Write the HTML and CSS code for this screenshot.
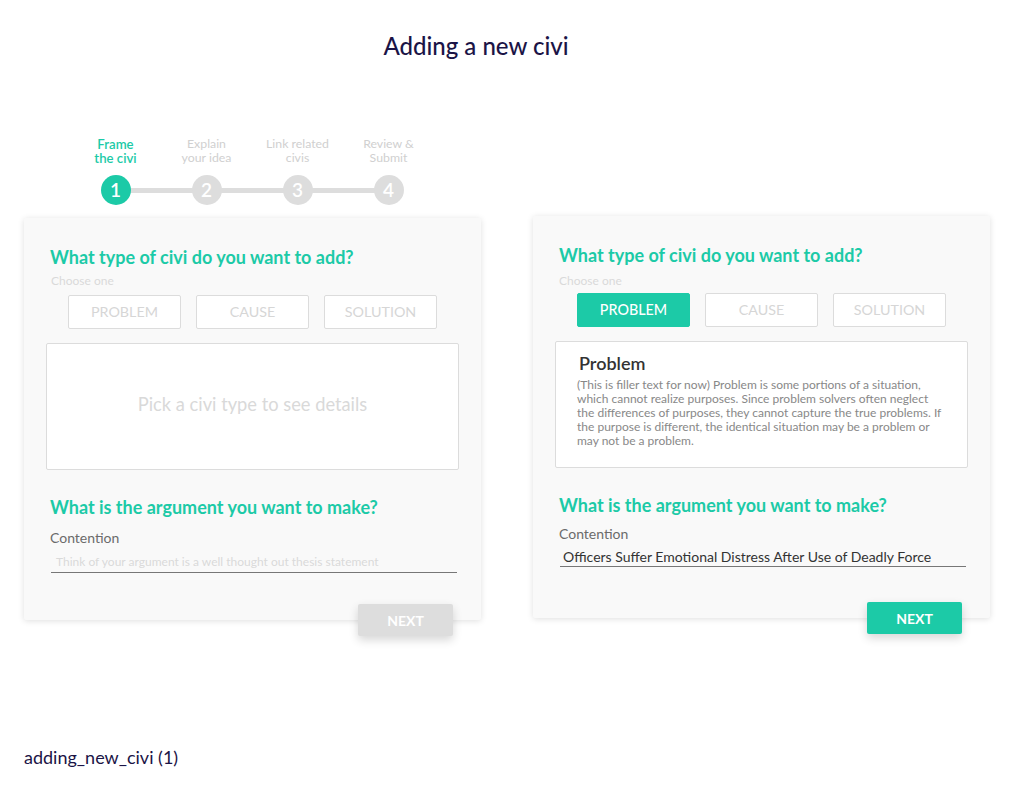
FILE: index.html
```html
<!DOCTYPE html>
<html lang="en">
<head>
<meta charset="utf-8">
<title>Adding a new civi</title>
<link rel="stylesheet" href="styles.css">
</head>
<body>
<div class="page">
  <h1 class="title">Adding a new civi</h1>

  <div class="stepper">
    <div class="step active">
      <div class="step-label">Frame<br>the civi</div>
      <div class="step-dot">1</div>
    </div>
    <div class="step">
      <div class="step-label">Explain<br>your idea</div>
      <div class="step-dot">2</div>
    </div>
    <div class="step">
      <div class="step-label">Link related<br>civis</div>
      <div class="step-dot">3</div>
    </div>
    <div class="step">
      <div class="step-label">Review &amp;<br>Submit</div>
      <div class="step-dot">4</div>
    </div>
  </div>

  <div class="cards">
    <section class="card card-left">
      <h2 class="card-heading">What type of civi do you want to add?</h2>
      <div class="hint">Choose one</div>
      <div class="type-row">
        <button class="type-btn">PROBLEM</button>
        <button class="type-btn">CAUSE</button>
        <button class="type-btn">SOLUTION</button>
      </div>
      <div class="detail detail-empty">Pick a civi type to see details</div>
      <h2 class="card-heading arg-heading">What is the argument you want to make?</h2>
      <div class="field-label">Contention</div>
      <div class="field placeholder">Think of your argument is a well thought out thesis statement</div>
      <div class="actions">
        <button class="next-btn disabled">NEXT</button>
      </div>
    </section>

    <section class="card card-right">
      <h2 class="card-heading">What type of civi do you want to add?</h2>
      <div class="hint hint-right">Choose one</div>
      <div class="type-row row-right">
        <button class="type-btn selected">PROBLEM</button>
        <button class="type-btn">CAUSE</button>
        <button class="type-btn">SOLUTION</button>
      </div>
      <div class="detail detail-filled">
        <h3 class="detail-title">Problem</h3>
        <p class="detail-text">(This is filler text for now) Problem is some portions of a situation, which cannot realize purposes. Since problem solvers often neglect the differences of purposes, they cannot capture the true problems. If the purpose is different, the identical situation may be a problem or may not be a problem.</p>
      </div>
      <h2 class="card-heading arg-heading">What is the argument you want to make?</h2>
      <div class="field-label filled-label">Contention</div>
      <div class="field filled">Officers Suffer Emotional Distress After Use of Deadly Force</div>
      <div class="actions">
        <button class="next-btn">NEXT</button>
      </div>
    </section>
  </div>

  <div class="caption">adding_new_civi (1)</div>
</div>
</body>
</html>
```

FILE: styles.css
```css
* { box-sizing: border-box; }

html, body {
  margin: 0;
  padding: 0;
  background: #ffffff;
}

body {
  font-family: Lato, "Open Sans", "Liberation Sans", sans-serif;
  color: #333;
}

.page {
  width: 1024px;
  height: 800px;
  padding-top: 31px;
}

.title {
  margin: 0;
  width: 952px;
  text-align: center;
  font-size: 24px;
  line-height: 30px;
  font-weight: 500;
  color: #1b1446;
}

/* stepper */
.stepper {
  position: relative;
  display: flex;
  margin-top: 76px;
  margin-left: 70px;
  width: 364px;
}

.stepper::before {
  content: "";
  position: absolute;
  left: 46px;
  right: 46px;
  top: 51px;
  height: 5px;
  background: #dddddd;
}

.step {
  position: relative;
  width: 91px;
  display: flex;
  flex-direction: column;
  align-items: center;
}

.step-label {
  font-size: 12.3px;
  line-height: 14px;
  height: 38px;
  text-align: center;
  color: #d0d0d0;
}

.step.active .step-label {
  color: #1ccaa7;
  font-weight: 600;
  font-size: 13.2px;
}

.step-dot {
  width: 30px;
  height: 30px;
  border-radius: 50%;
  background: #dddddd;
  color: #ffffff;
  font-size: 19px;
  font-weight: 600;
  line-height: 30px;
  text-align: center;
}

.step.active .step-dot {
  background: #1ccaa7;
}

/* cards */
.cards {
  display: flex;
  align-items: flex-start;
  gap: 52px;
  margin-top: 11px;
  margin-left: 24px;
}

.card {
  width: 457px;
  height: 402px;
  background: #f9f9f9;
  border-radius: 2px;
  box-shadow: 0 1px 6px rgba(0, 0, 0, 0.13);
  padding: 27px 22px 0 22px;
  display: flex;
  flex-direction: column;
}

.card-left { margin-top: 2px; }

.card-heading {
  margin: 0 0 0 4px;
  font-size: 18px;
  line-height: 24px;
  font-weight: 700;
  color: #1ccaa7;
}

.hint {
  margin: 5px 0 0 5px;
  font-size: 12px;
  line-height: 14px;
  color: #d9d9d9;
}

.hint-right {
  margin-top: 7px;
  margin-left: 4px;
}

.type-row {
  display: flex;
  gap: 15px;
  margin: 7px 0 0 22px;
}

.row-right {
  margin-top: 5px;
}

.type-btn {
  width: 113px;
  height: 34px;
  background: #ffffff;
  border: 1px solid #dcdcdc;
  border-radius: 2px;
  font-family: inherit;
  font-size: 14.3px;
  line-height: 30px;
  color: #d6d6d6;
  padding: 0;
}

.type-btn.selected {
  background: #1ccaa7;
  border-color: #1ccaa7;
  color: #ffffff;
  font-weight: 500;
}

.detail {
  margin-top: 14px;
  height: 127px;
  background: #ffffff;
  border: 1px solid #dcdcdc;
  border-radius: 2px;
}

.detail-empty {
  display: flex;
  align-items: center;
  justify-content: center;
  padding-bottom: 5px;
  font-size: 18.3px;
  color: #d9d9d9;
}

.detail-filled {
  padding: 10px 21px 0 21px;
}

.detail-title {
  margin: 0 0 0 2px;
  font-size: 18px;
  line-height: 22px;
  font-weight: 600;
  color: #333333;
}

.detail-text {
  margin: 4px 0 0 0;
  font-size: 12px;
  line-height: 14px;
  color: #888888;
}

.arg-heading {
  margin-top: 25px;
}

.field-label {
  margin: 10px 0 0 4px;
  font-size: 14px;
  line-height: 18px;
  color: #6b6b6b;
}

.filled-label { margin-top: 8px; }

.field {
  margin: 3px 2px 0 5px;
  height: 23px;
  border-bottom: 1px solid #777777;
  padding: 4px 0 0 5px;
  font-size: 12px;
  line-height: 16px;
}

.field.placeholder {
  color: #dadada;
}

.field.filled {
  margin-top: 3px;
  height: 21px;
  padding: 0 0 0 3px;
  font-size: 14px;
  line-height: 22px;
  color: #333333;
}

.actions {
  margin-top: auto;
  margin-bottom: -16px;
  margin-right: 6px;
  display: flex;
  justify-content: flex-end;
}

.next-btn {
  width: 95px;
  height: 32px;
  border: none;
  border-radius: 2px;
  background: #1ccaa7;
  color: #ffffff;
  font-family: inherit;
  font-size: 14px;
  font-weight: 700;
  box-shadow: 0 4px 10px rgba(0, 0, 0, 0.16);
}

.next-btn.disabled {
  background: #dddddd;
}

.caption {
  margin-top: 126px;
  margin-left: 24px;
  font-size: 18px;
  line-height: 22px;
  color: #1b1446;
}
```
